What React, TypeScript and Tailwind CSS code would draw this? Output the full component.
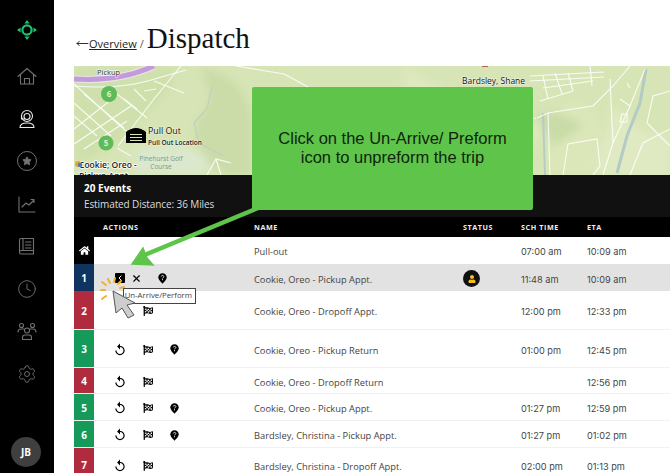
import React from 'react';
import { Star, Clock, Settings, X, ChevronLeft, MoveLeft } from 'lucide-react';
import { FaFlagCheckered, FaHome, FaUser } from 'react-icons/fa';
import { MdReplay } from 'react-icons/md';

type Trip = {
  label: string;
  color: string;
  height: string;
  name: string;
  sch: string;
  eta: string;
  pin?: boolean;
  undoHidden?: boolean;
};

const trips: Trip[] = [
  { label: '2', color: 'bg-[#b12b3e]', height: 'h-[39px]', name: 'Cookie, Oreo - Dropoff Appt.', sch: '12:00 pm', eta: '12:33 pm', undoHidden: true },
  { label: '3', color: 'bg-[#159a59]', height: 'h-[38px]', name: 'Cookie, Oreo - Pickup Return', sch: '01:00 pm', eta: '12:45 pm', pin: true },
  { label: '4', color: 'bg-[#b12b3e]', height: 'h-[26px]', name: 'Cookie, Oreo - Dropoff Return', sch: '', eta: '12:56 pm' },
  { label: '5', color: 'bg-[#159a59]', height: 'h-[27px]', name: 'Cookie, Oreo - Pickup Appt.', sch: '01:27 pm', eta: '12:59 pm', pin: true },
  { label: '6', color: 'bg-[#159a59]', height: 'h-[27px]', name: 'Bardsley, Christina - Pickup Appt.', sch: '01:27 pm', eta: '01:02 pm', pin: true },
  { label: '7', color: 'bg-[#b12b3e]', height: 'h-[34px]', name: 'Bardsley, Christina - Dropoff Appt.', sch: '02:00 pm', eta: '01:13 pm' },
];

// street lines of the map, in map coordinates
const roads = [
  'M0 18 L43 57 L60 72',
  'M10 28 L50 62',
  'M0 37 L37 70',
  'M0 50 L23 70',
  'M43 28 L73 52',
  'M0 63 L33 37 L43 28',
  'M0 78 L57 40',
  'M10 83 L53 55',
  'M107 0 L80 33 L57 63 L44 80',
  'M80 15 L110 27',
  'M0 20 Q50 24 84 12 L112 4',
  'M60 23 L72 35',
  'M50 33 L63 43',
  'M70 25 L82 23',
  'M43 82 L57 90',
  'M133 109 L142 93 L157 97',
  'M147 109 L142 93',
  'M162 0 L210 8 L236 22',
  'M225 90 L262 109',
  'M456 10 L530 6',
  'M456 15 L530 11',
  'M469 22 L519 15',
  'M466 35 L499 25',
  'M469 10 L474 33',
  'M481 7 L488 28',
  'M494 7 L499 25',
  'M516 0 L518 20',
  'M463 52 L474 47 L476 109',
  'M474 47 L499 43 L519 40 L539 20 L556 0',
  'M536 13 L539 77 L529 109',
  'M571 3 L556 40 L539 77',
  'M553 17 L556 22 M546 33 L556 40 M548 48 H553 V56 H546Z',
  'M596 25 L579 30 L573 57 L596 80',
  'M556 109 L569 77 L596 63',
  'M489 109 L494 78 L523 73 L526 100 L519 109',
  'M400 40 L440 55 L462 52',
  'M340 100 L400 88 L440 100',
];

function PinIcon() {
  return (
    <svg viewBox="0 0 12 14" className="h-[11px] w-[9px]">
      <path d="M6 0C2.7 0 .4 2.400.4 5.400.4 9 6 14 6 14s5.600-5 5.600-8.600C11.600 2.400 9.300 0 6 0Z" fill="#000" />
      <path d="M4.300 4.300c.2-1 .9-1.400 1.700-1.400 1 0 1.800.6 1.800 1.500 0 1.300-1.800 1.300-1.800 2.500" fill="none" stroke="#fff" strokeWidth="1.100" />
      <circle cx="6" cy="8.500" r=".7" fill="#fff" />
    </svg>
  );
}

function Logo() {
  return (
    <svg viewBox="0 0 20 20" className="h-[20px] w-[20px]">
      <circle cx="10" cy="10" r="4.600" fill="none" stroke="#1fc36c" strokeWidth="2.200" />
      <path d="M10 0l2.600 3.600H7.400ZM10 20l-2.600-3.600h5.200ZM0 10l3.600-2.600v5.200ZM20 10l-3.600 2.600V7.400Z" fill="#1fc36c" />
    </svg>
  );
}

function SideIcon({ children, stroke = '#727272' }: { children: React.ReactNode; stroke?: string }) {
  return (
    <svg viewBox="0 0 20 20" className="h-[20px] w-[20px]" fill="none" stroke={stroke} strokeWidth="1.100" strokeLinejoin="round" strokeLinecap="round">
      {children}
    </svg>
  );
}

function MapView() {
  const labelHalo = { paintOrder: 'stroke' } as React.CSSProperties;
  return (
    <svg viewBox="0 0 596 109" className="block h-[109px] w-full" style={{ fontFamily: '"Open Sans", sans-serif' }}>
      <defs>
        <filter id="terrain" x="-10%" y="-10%" width="120%" height="120%">
          <feGaussianBlur stdDeviation="4" />
        </filter>
      </defs>
      <rect width="596" height="109" fill="#d7e5b6" />
      <g filter="url(#terrain)">
        <path d="M125 0 C170 10 178 40 178 60 L178 109 L150 109 C125 90 115 70 125 50 C140 40 135 20 125 0Z" fill="#cbdca8" />
        <path d="M62 84 C90 76 120 80 132 92 L134 109 L60 109Z" fill="#dbe8cd" />
        <path d="M330 0 C380 40 420 30 470 60 L440 109 L340 109 C300 70 340 40 330 0Z" fill="#dfe9bf" />
        <path d="M490 40 C510 30 530 40 528 109 L470 109Z" fill="#dbe7b9" />
        <path d="M540 40 C560 60 570 70 596 72 L596 109 L520 109Z" fill="#e0eac2" />
        <path d="M460 50 C470 45 490 45 510 60 L480 80Z" fill="#c9dba7" />
        <path d="M0 0 H100 V20 C70 50 40 90 0 100Z" fill="#cfe0ac" />
      </g>
      <path d="M138 20 L133 43 L120 57 L125 77 L150 90" fill="none" stroke="#bdd2c2" strokeWidth="1.200" />
      <path d="M469 47 L471 109" fill="none" stroke="#b5cdc4" strokeWidth="2" />
      <path d="M572 3 L566 37 L553 70 L543 107" fill="none" stroke="#b3cbc4" strokeWidth="3" />
      {roads.map((d, i) => (
        <path key={i} d={d} fill="none" stroke="#fff" strokeWidth="1.100" opacity="0.85" />
      ))}
      <path d="M0 13 Q45 16 80 0" fill="none" stroke="#e9e6ea" strokeWidth="7" />
      <path d="M0 13 Q45 16 80 0" fill="none" stroke="#c39ada" strokeWidth="5" />
      <text x="23" y="9" fontSize="7.500" fontWeight="500" fill="#333" stroke="#ffffffb0" strokeWidth="1.500" style={labelHalo}>Pickup</text>
      <circle cx="35" cy="28" r="8" fill="#5fbb58" />
      <text x="35" y="31" fontSize="8" fontWeight="700" fill="#d8f0d0" textAnchor="middle">6</text>
      <circle cx="32" cy="77" r="7.500" fill="#5fbb58" />
      <text x="32" y="80" fontSize="8" fontWeight="700" fill="#d8f0d0" textAnchor="middle">5</text>
      <path d="M52 66 Q62 58 72 66 V77 H52Z" fill="#000" />
      <path d="M56 68.500 H68 M56 71.500 H68 M56 74.500 H68" stroke="#d6e5b4" strokeWidth="1.200" />
      <text x="74" y="68" fontSize="8.800" fontWeight="500" fill="#111" stroke="#ffffff80" strokeWidth="1" style={labelHalo}>Pull Out</text>
      <text x="74" y="79" fontSize="6.500" fontWeight="600" fill="#222" stroke="#ffffff80" strokeWidth="1" style={labelHalo}>Pull Out Location</text>
      <text x="87" y="94.500" fontSize="6.500" fill="#7c9a88" textAnchor="middle">Pinehurst Golf</text>
      <text x="87" y="103" fontSize="6.500" fill="#7c9a88" textAnchor="middle">Course</text>
      <text x="5" y="102" fontSize="8.500" fontWeight="600" fill="#222" stroke="#fff" strokeWidth="1.500" style={labelHalo}>Cookie; Oreo -</text>
      <text x="5" y="113" fontSize="8.500" fontWeight="600" fill="#222" stroke="#fff" strokeWidth="1.500" style={labelHalo}>Pickup Appt.</text>
      <circle cx="4" cy="98" r="3" fill="#f0a030" />
      <circle cx="6" cy="99" r="2.200" fill="#3a7bd5" />
      <text x="388" y="18" fontSize="8.500" fontWeight="500" fill="#111" stroke="#ffffffb0" strokeWidth="1" style={labelHalo}>Bardsley, Shane</text>
      <path d="M408 0 h6" stroke="#a33" strokeWidth="1.500" />
    </svg>
  );
}

function Cell({ className, children }: { className?: string; children?: React.ReactNode }) {
  return <div className={`flex items-center ${className ?? ''}`}>{children}</div>;
}

const rowGrid = 'grid grid-cols-[20px_160px_209px_58px_66px_1fr]';
const rowText = "text-[9.300px] text-[#444]";
const timeCell = "pt-[4px] font-['Inter',sans-serif] text-[9.200px]";

export default function App() {
  return (
    <div className="relative flex h-[473px] w-[670px] overflow-hidden bg-white font-['Open_Sans',sans-serif]">
      <aside className="flex h-full w-[54px] shrink-0 flex-col items-center bg-black pt-[20px]">
        <Logo />
        <div className="mt-[26px] flex flex-col items-center gap-[22.500px] text-[#727272]">
          <SideIcon>
            <path d="M1 10.500 L10 2.500 L19 10.500 M3.500 8.500 V18 H16.500 V8.500 M7.500 18 V12.500 H12.500 V18" />
          </SideIcon>
          <SideIcon stroke="#e8e8e8">
            <circle cx="10" cy="7" r="5.500" />
            <circle cx="10" cy="7.500" r="3" />
            <path d="M3 18.500c0-3 2-4.500 7-4.500s7 1.500 7 4.500Z" />
            <path d="M4.500 7v3h3" />
          </SideIcon>
          <div className="flex h-[20px] w-[20px] items-center justify-center rounded-full border-[1.500px] border-[#727272]">
            <Star size={10} fill="currentColor" />
          </div>
          <SideIcon>
            <path d="M2 3 V18 H18" />
            <path d="M5 13 L9 9 L12 11 L17 6 M14 5.500 H17 V8.500" />
          </SideIcon>
          <SideIcon>
            <path d="M4 2.500 H16.500 V18 H4 Q2.500 18 2.500 16.500 V4 Q2.500 2.500 4 2.500Z" />
            <path d="M6 2.500 V14.500 H16.500 M2.500 16 Q2.500 14.500 4 14.500 H6" />
            <path d="M8.500 6 H14 M8.500 9 H14 M8.500 12 H14" />
          </SideIcon>
          <Clock size={20} strokeWidth={1.100} />
          <SideIcon>
            <circle cx="10" cy="9.500" r="2.500" />
            <path d="M5.500 18.500 V16.500 Q5.500 14 8 14 H12 Q14.500 14 14.500 16.500 V18.500Z" />
            <circle cx="4.500" cy="4.500" r="2" />
            <circle cx="15.500" cy="4.500" r="2" />
            <path d="M1 11 Q1 8 4 8 H7 M19 11 Q19 8 16 8 H13" />
          </SideIcon>
          <Settings size={20} strokeWidth={1.100} />
        </div>
        <div className="mt-auto mb-[6px] flex h-[30px] w-[30px] -translate-x-[1px] items-center justify-center rounded-full bg-[#3f3f3f] text-[10px] font-bold text-white">
          JB
        </div>
      </aside>

      <main className="min-w-0 flex-1 pl-[20px]">
        <div className="flex h-[66px] items-baseline pt-[24px] pl-[2px] text-[#222]">
          <MoveLeft size={13} strokeWidth={1.500} className="translate-y-[2px] text-black" />
          <a className="text-[11px] text-[#222] underline">Overview</a>
          <span className="ml-[3px] text-[11px] text-[#555]">/</span>
          <h1 className="ml-[3px] font-['Liberation_Serif',serif] text-[29px] leading-none text-[#111]">Dispatch</h1>
        </div>

        <MapView />

        <div className="flex h-[42px] flex-col justify-center bg-[#111] pl-[10px] text-[10px] leading-[16px]">
          <span className="font-bold text-white">20 Events</span>
          <span className="tracking-[-0.01em] text-[#ddd]">Estimated Distance: 36 Miles</span>
        </div>

        <div className={`${rowGrid} h-[20px] items-center bg-black text-[7.200px] font-bold tracking-[0.08em] text-[#eee]`}>
          <span />
          <span className="pl-[9px]">ACTIONS</span>
          <span>NAME</span>
          <span>STATUS</span>
          <span>SCH TIME</span>
          <span>ETA</span>
        </div>

        <div className={`${rowGrid} h-[27px] ${rowText}`}>
          <Cell className="justify-center bg-black text-white"><FaHome size={11} /></Cell>
          <Cell />
          <Cell className="pt-[2px]">Pull-out</Cell>
          <Cell />
          <Cell className="pt-[2px] font-['Inter',sans-serif] text-[9.200px]">07:00 am</Cell>
          <Cell className="pt-[2px] font-['Inter',sans-serif] text-[9.200px]">10:09 am</Cell>
        </div>

        <div className={`${rowGrid} h-[27px] bg-[#e2e2e2] ${rowText}`}>
          <Cell className="justify-center bg-[#0f3460] pt-[2px] text-[10px] font-bold text-white">1</Cell>
          <Cell className="pt-[1px] pl-[21px]">
            <span className="flex h-[10px] w-[10px] items-center justify-center rounded-[1px] bg-black text-white">
              <ChevronLeft size={8} strokeWidth={3} />
            </span>
            <X size={11} strokeWidth={2.500} className="ml-[6px] text-black" />
            <span className="ml-[16px] flex"><PinIcon /></span>
          </Cell>
          <Cell className="pt-[4px]">Cookie, Oreo - Pickup Appt.</Cell>
          <Cell className="pt-[2px]">
            <span className="flex h-[17px] w-[17px] items-center justify-center rounded-full bg-[#111] text-[#f5bd1f]">
              <FaUser size={8} />
            </span>
          </Cell>
          <Cell className={timeCell}>11:48 am</Cell>
          <Cell className={timeCell}>10:09 am</Cell>
        </div>

        {trips.map((trip) => (
          <div key={trip.label} className={`${rowGrid} ${trip.height} border-b border-[#f1f1f1] ${rowText}`}>
            <Cell className={`justify-center pt-[2px] text-[10px] font-bold text-white ${trip.color}`}>{trip.label}</Cell>
            <Cell className="pt-[2px] pl-[19px] text-black">
              <MdReplay size={14} className={trip.undoHidden ? 'invisible' : ''} />
              <FaFlagCheckered size={10} className="ml-[16px]" />
              {trip.pin && <span className="ml-[17px] flex"><PinIcon /></span>}
            </Cell>
            <Cell className="pt-[4px]">{trip.name}</Cell>
            <Cell />
            <Cell className={timeCell}>{trip.sch}</Cell>
            <Cell className={timeCell}>{trip.eta}</Cell>
          </div>
        ))}
      </main>

      {/* callout with its arrow, lying over the table */}
      <svg viewBox="0 0 670 473" className="pointer-events-none absolute inset-0 h-[473px] w-[670px]">
        <path d="M258 208 L142 256" stroke="#5fc44a" strokeWidth="4.500" fill="none" />
        <path d="M132 264 L153 265 L147 258 L143 248Z" fill="#5fc44a" stroke="#5fc44a" strokeWidth="1.500" />
      </svg>
      <div className="absolute top-[87px] left-[252px] flex h-[123px] w-[281px] items-center justify-center rounded-[2px] bg-[#5fc44a] text-center font-['Liberation_Sans',sans-serif] text-[16.500px] leading-[19px] text-[#10240c]">
        <p className="-mt-[2px]">Click on the Un-Arrive/ Preform<br />icon to unpreform the trip</p>
      </div>

      <div className="absolute top-[288px] left-[123px] flex h-[16px] w-[73px] items-center justify-end whitespace-nowrap border border-[#444] bg-white pr-[3px] text-[7.800px] text-[#444]">
        Un-Arrive/Perform
      </div>

      {/* click burst and pointer */}
      <svg viewBox="0 0 670 473" className="pointer-events-none absolute inset-0 h-[473px] w-[670px]">
        <path
          d="M106 296 L102 299 M105 290 L101 290 M106 285 L102 282 M110 283 L108 279 M114 282 L115 278 M118 284 L121 281 M120 288 L124 287"
          stroke="#f2b035"
          strokeWidth="2"
          strokeLinecap="round"
        />
        <path d="M113 291 L116 313 L122 308 L128 318 L134 315 L127 305 L135 303Z" fill="#cdcdcd" stroke="#555" strokeWidth="1" strokeLinejoin="round" />
      </svg>
    </div>
  );
}
